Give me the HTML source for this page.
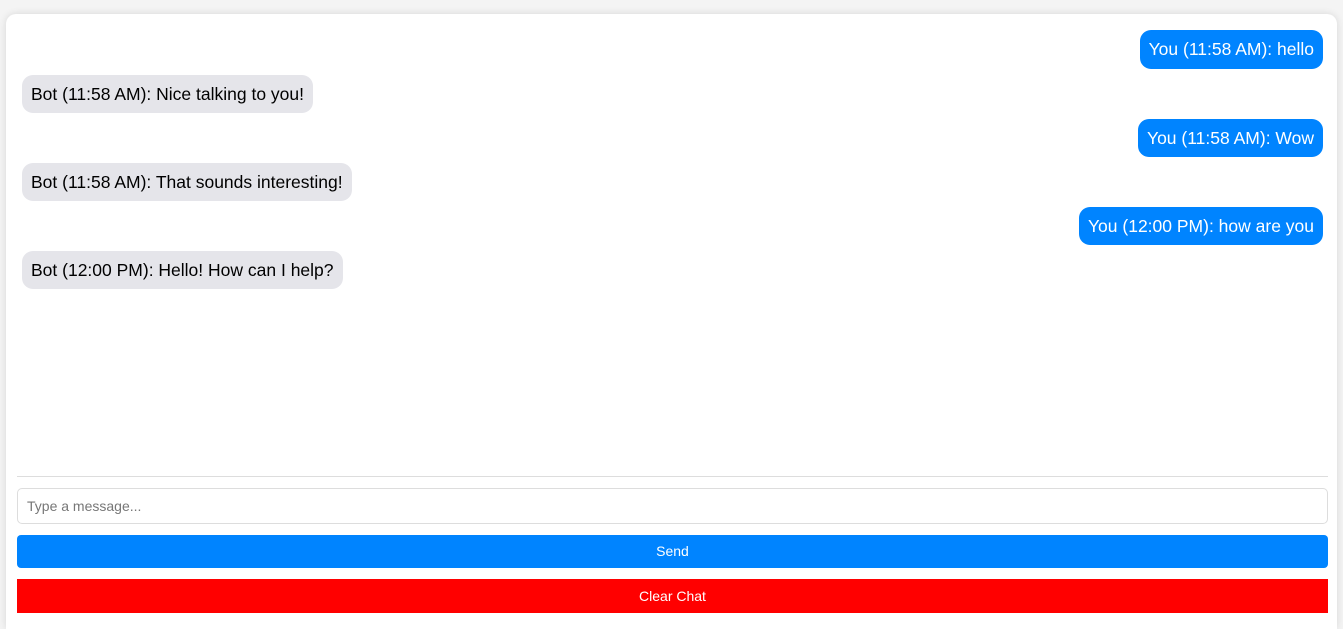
<!DOCTYPE html>
<html><head><style>
html,body{margin:0;padding:0;background:#f4f4f4;font-family:"Liberation Sans",Arial,sans-serif;width:1343px;height:629px;overflow:hidden;}
.c{position:absolute;left:6px;top:14px;width:1331px;height:615px;background:#fff;border-radius:10px 10px 0 0;box-shadow:0 0 8px rgba(0,0,0,0.12);overflow:hidden;}
.m{position:absolute;height:38px;line-height:38px;font-size:17.5px;padding:0 9px;border-radius:11px;white-space:nowrap;}
.u{right:14px;background:#0084ff;color:#fff;}
.b{left:16px;background:#e5e5ea;color:#000;}
.hr{position:absolute;left:11px;width:1311px;top:462px;border-top:1px solid #ddd;}
.in{position:absolute;left:11px;top:474px;height:34px;border:1px solid #ddd;border-radius:5px;font-size:14px;color:#777;line-height:34px;padding-left:9px;width:1300px;}
.btn{position:absolute;left:11px;width:1311px;color:#fff;font-size:14px;text-align:center;}
</style></head><body>
<div class="c">
<div class="m u" style="top:16px;height:39px;line-height:39px">You (11:58 AM): hello</div>
<div class="m b" style="top:61px">Bot (11:58 AM): Nice talking to you!</div>
<div class="m u" style="top:105px">You (11:58 AM): Wow</div>
<div class="m b" style="top:149px">Bot (11:58 AM): That sounds interesting!</div>
<div class="m u" style="top:193px">You (12:00 PM): how are you</div>
<div class="m b" style="top:237px">Bot (12:00 PM): Hello! How can I help?</div>
<div class="hr"></div>
<div class="in">Type a message...</div>
<div class="btn" style="top:521px;height:33px;line-height:33px;background:#0084ff;border-radius:4px">Send</div>
<div class="btn" style="top:565px;height:34px;line-height:34px;background:#ff0000">Clear Chat</div>
</div>
</body></html>
